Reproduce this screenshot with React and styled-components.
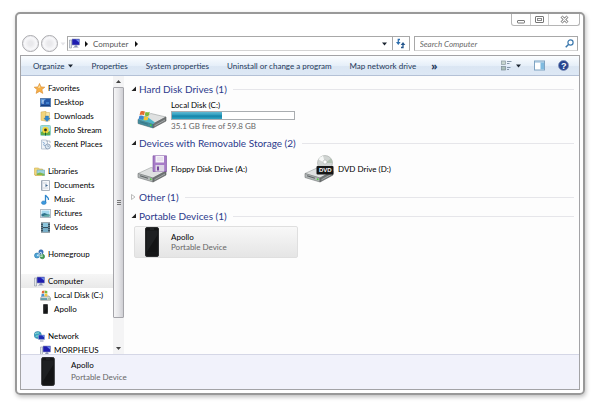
import React, { useState } from "react"
import styled, { createGlobalStyle } from "styled-components"


// ---- icons ----

const StarIcon = () => (
  <svg width="11" height="11" viewBox="0 0 11 11" aria-hidden="true">
    <path d="M5.5 .4 7 3.9l3.8.3-2.9 2.4.9 3.8-3.3-2-3.4 2 .9-3.8L.2 4.2 4 3.9z" fill="#f6b04a" stroke="#d98a2b" strokeWidth=".6" />
    <path d="M5.5 2.2 6.4 4.6 4 5z" fill="#fde3a6" />
  </svg>
)

const DesktopIcon = () => (
  <svg width="11" height="11" viewBox="0 0 11 11" aria-hidden="true">
    <rect x=".5" y="1.5" width="10" height="8" fill="#2458a8" stroke="#5b7fae" />
    <path d="M1 2h5L1 7z" fill="#5f9ade" />
    <path d="M2 4h2M2 6h2" stroke="#d7e6f7" />
    <path d="M1 8.500h9" stroke="#173f80" />
    <path d="M6 5h3v2H6z" fill="#3e7fcb" />
  </svg>
)

const DownloadsIcon = () => (
  <svg width="11" height="11" viewBox="0 0 11 11" aria-hidden="true">
    <path d="M1 1l5-.7V10L1 9.300z" fill="#f2d57c" stroke="#cfa951" strokeWidth=".5" />
    <path d="M6 1.500h3.500V10H5z" fill="#f8e7a9" stroke="#cfae5c" strokeWidth=".5" />
    <path d="M5.500 5h3v2.300H10L7 10.600 4 7.300h1.500z" fill="#2e86cf" stroke="#1d65a8" strokeWidth=".4" />
  </svg>
)

const PhotoStreamIcon = () => (
  <svg width="11" height="11" viewBox="0 0 11 11" aria-hidden="true">
    <rect x=".5" y=".5" width="10" height="10" rx="1" fill="#9fdbe4" stroke="#8ccfc4" />
    <path d="M1 7l3-1.500L6 8l4-2v4H1z" fill="#5fae4a" />
    <circle cx="5.500" cy="5" r="3.200" fill="#f3d63c" />
    <circle cx="5.500" cy="5" r="1.400" fill="#3c3512" />
    <path d="M5.500 7.500v3" stroke="#1c5f28" />
  </svg>
)

const RecentIcon = () => (
  <svg width="11" height="11" viewBox="0 0 11 11" aria-hidden="true">
    <path d="M1.500 1h5l1 1v8h-6z" fill="#eef3f8" stroke="#a5b3c4" strokeWidth=".7" />
    <path d="M2.500 3l2 1-1 2 2 1" fill="none" stroke="#7fa6d0" strokeWidth=".8" />
    <circle cx="7.800" cy="7.500" r="2.500" fill="#dce9f4" stroke="#8094ad" strokeWidth=".8" />
    <path d="M7.800 6v1.500H9M6 2h4v2" fill="none" stroke="#8496ab" strokeWidth=".6" />
  </svg>
)

const LibrariesIcon = () => (
  <svg width="11" height="11" viewBox="0 0 11 11" aria-hidden="true">
    <path d="M.5 2h4l1 1h3v6h-8z" fill="#f2d879" stroke="#cdae53" strokeWidth=".6" />
    <path d="M3 4h7.500v5.500H3z" fill="#9ed3dd" stroke="#6ca9b0" strokeWidth=".6" />
    <path d="M3 7.500 6 6.500l4.500 1.500v1.500H3z" fill="#83b84b" />
    <path d="M1 9.500h7" stroke="#d8c06a" />
  </svg>
)

const DocumentIcon = () => (
  <svg width="11" height="11" viewBox="0 0 11 11" aria-hidden="true">
    <path d="M1.500 .5h8v10h-8z" fill="#f5f7fa" stroke="#a9b3be" />
    <path d="M3 3h4M3 8h5" stroke="#ccd4dc" />
    <path d="M5.500 4l2.500 1.500L5.500 7z" fill="#42698f" />
    <path d="M2 1v9" stroke="#7c8fa3" strokeWidth=".6" />
  </svg>
)

const MusicIcon = () => (
  <svg width="11" height="11" viewBox="0 0 11 11" aria-hidden="true">
    <path d="M5.500 8.500V1c.5 2 3.500 2 3 5" fill="none" stroke="#2f87cc" strokeWidth="1.300" />
    <ellipse cx="3.800" cy="8.700" rx="2.400" ry="1.800" fill="#3d9ade" stroke="#2272b4" strokeWidth=".5" />
  </svg>
)

const PicturesIcon = () => (
  <svg width="11" height="11" viewBox="0 0 11 11" aria-hidden="true">
    <rect x=".5" y="1.500" width="10" height="8" fill="#fff" stroke="#b2bcc5" />
    <rect x="1.500" y="2.500" width="8" height="6" fill="#a4d8ee" />
    <path d="M1.500 6l3-1 5 2v1.500h-8z" fill="#31748c" />
    <path d="M4 7.500 9.500 6v2.500H4z" fill="#60a9a2" />
  </svg>
)

const VideosIcon = () => (
  <svg width="11" height="11" viewBox="0 0 11 11" aria-hidden="true">
    <rect x="1" y=".5" width="9" height="10" fill="#35505f" />
    <rect x="3" y="1" width="5" height="4" fill="#8cc5dc" />
    <rect x="3" y="6" width="5" height="4" fill="#76aec8" />
    <path d="M2 1v9M9 1v9" stroke="#c6d3da" strokeWidth=".8" strokeDasharray="1 1" />
  </svg>
)

const HomegroupIcon = () => (
  <svg width="11" height="11" viewBox="0 0 11 11" aria-hidden="true">
    <circle cx="3" cy="6.500" r="2.500" fill="#4da5d6" stroke="#2372a8" strokeWidth=".6" />
    <circle cx="7" cy="3" r="2.200" fill="#3b78c4" stroke="#20529b" strokeWidth=".6" />
    <circle cx="8.300" cy="7.500" r="2.300" fill="#46a052" stroke="#22773a" strokeWidth=".6" />
    <path d="M3 6.500 7 3l1.300 4.500z" fill="none" stroke="#dff0fa" strokeWidth=".8" />
  </svg>
)

const ComputerIcon = () => (
  <svg width="11" height="11" viewBox="0 0 11 11" aria-hidden="true">
    <path d="M.5 2h2v8h-2z" fill="#e3e6ea" stroke="#8b95a3" strokeWidth=".6" />
    <path d="M3 1h7.500v6H3z" fill="#1e1cb0" stroke="#8d96b8" strokeWidth=".6" />
    <path d="M6.500 1.400h3.600v3z" fill="#6f8bea" />
    <path d="M6 7.300h2l.7 1.700H5z" fill="#8a92b5" />
    <path d="M4 9.500h5.500" stroke="#b6bbcb" strokeWidth=".8" />
  </svg>
)

const WinDriveIcon = () => (
  <svg width="11" height="11" viewBox="0 0 11 11" aria-hidden="true">
    <path d="M.5 8 2 6h7l1.500 2v2.200H.5z" fill="#d1d6d4" stroke="#818987" strokeWidth=".6" />
    <path d="M1 8.300h6v1.400H1z" fill="#3f8d9e" />
    <path d="M2 1l2.300-.5v2.700L1.700 3.500z" fill="#e2683a" />
    <path d="M4.700.5 7.300 1v2.500l-2.600-.3z" fill="#79b541" />
    <path d="M1.600 4l2.600-.3v2.600L1.300 6.500z" fill="#4a90d0" />
    <path d="M4.700 3.700l2.700.3v2.500l-2.700-.2z" fill="#f3c73d" />
    <path d="M8.500 8.800h1" stroke="#58b54e" />
  </svg>
)

const NetworkIcon = () => (
  <svg width="11" height="11" viewBox="0 0 11 11" aria-hidden="true">
    <circle cx="3.800" cy="4" r="3.600" fill="#35a3c4" stroke="#1d6f9d" strokeWidth=".5" />
    <path d="M1 3c2-2 3 0 4-1.500M1.500 6C3 4 4 6 5 4" fill="none" stroke="#b6ebd4" strokeWidth=".9" />
    <path d="M4.500 4h6v4.500h-6z" fill="#1c2bb2" stroke="#9aa9c9" strokeWidth=".6" />
    <path d="M7.500 4.300h2.700v2z" fill="#7093ec" />
    <path d="M6 10h3.500" stroke="#8f99b0" />
  </svg>
)

const PhoneIcon = ({ width = 5, height = 10 }) => (
  <svg width={width} height={height} viewBox="0 0 14 30" aria-hidden="true">
    <rect x=".5" y=".5" width="13" height="29" rx="1.500" fill="#151617" stroke="#2c2d2f" />
    <rect x="1.500" y="3.500" width="11" height="22" fill="#1e2022" />
    <path d="M1.500 25.500 12.500 8v17.500z" fill="#131415" />
    <path d="M5 2h4" stroke="#3e4042" strokeWidth=".7" />
  </svg>
)

// the drive box shared by the big tiles, extra art goes over it
const DriveIcon = ({ children }) => (
  <svg width="30" height="28" viewBox="0 0 30 28" aria-hidden="true">
    <path d="M1 18.500 14 12.500 29 16 16 23z" fill="#dfe1e1" stroke="#9b9fa0" strokeWidth=".6" />
    <path d="M1 18.500v4L16 27v-4z" fill="#b4b8b9" stroke="#6e7374" strokeWidth=".6" />
    <path d="M16 23 29 16v4l-13 7z" fill="#6f7475" stroke="#585c5d" strokeWidth=".6" />
    <path d="M3 20.700l8 2.500" stroke="#5e6364" strokeWidth="1.200" />
    <path d="M13 24l1.500.5" stroke="#4fd03e" strokeWidth="1.600" />
    <path d="M17.500 24.800 28 19" stroke="#c8cbcb" strokeWidth=".6" />
    {children}
  </svg>
)

const HardDriveArt = () => (
  <>
    <path d="M1 18.500 9 15l9 6.500-2 1.500z" fill="#4fb4c8" />
    <path d="M1 18.500v4L16 27v-4z" fill="#2b7f94" opacity=".8" />
    <path d="M13 24l1.500.5" stroke="#4fd03e" strokeWidth="1.600" />
    <path d="M3.500 10.500c2-.9 3-.5 4.500 0L7 14.300c-1.700-.6-2.700-.6-4.500 0z" fill="#e46b31" />
    <path d="M8.600 10.700c1.700.8 2.700.6 4.200 0l-1 3.700c-1.600.7-2.600.6-4.200.1z" fill="#7cb93c" />
    <path d="M2.300 15c1.700-.7 2.700-.6 4.500 0L6 18.700c-1.700-.6-2.700-.6-4.500 0z" fill="#3f86cf" />
    <path d="M7.400 15.200c1.700.7 2.700.5 4.200 0l-1 3.700c-1.600.6-2.600.5-4.200.1z" fill="#f5c736" />
  </>
)

const FloppyArt = () => (
  <>
    <path d="M16 .8h13.500v15.700H16z" fill="#a67bc7" stroke="#7a4f9f" strokeWidth=".6" />
    <path d="M18.500 1h8.500v6.500h-8.500z" fill="#f5f2f8" />
    <path d="M18.500 10h8.700v6.500h-8.700z" fill="#dcd6e4" />
    <path d="M20 11.500h2v4h-2z" fill="#76499c" />
    <path d="M20 3h6M20 5h6" stroke="#c9bdd6" strokeWidth=".6" />
  </>
)

const DvdLabel = styled.text`
  font: bold 6px "Liberation Sans", sans-serif;
  fill: #fff;
`

const DvdArt = () => (
  <>
    <circle cx="21" cy="8" r="7.500" fill="#d0d4d2" stroke="#a2a7a5" strokeWidth=".6" />
    <path d="M21 8 14.500 4.500A7.500 7.500 0 0 1 19 .8z" fill="#f6f8f7" />
    <path d="M21 8 27 3.500A7.500 7.500 0 0 1 28.500 8z" fill="#b3c2b3" />
    <circle cx="21" cy="7" r="2" fill="#fff" stroke="#a2a7a5" strokeWidth=".5" />
    <rect x="12.500" y="11" width="17" height="8.500" rx="1" fill="#161616" />
    <DvdLabel x="15" y="17">DVD</DvdLabel>
  </>
)

const ArrowIcon = () => (
  <svg width="3" height="6" viewBox="0 0 3 6" aria-hidden="true">
    <path d="M0 0l3 3-3 3z" fill="#111" />
  </svg>
)

const CaretIcon = () => (
  <svg width="5" height="4" viewBox="0 0 5 4" aria-hidden="true">
    <path d="M0 .5h5L2.500 3.500z" fill="#1b2430" />
  </svg>
)

const RefreshIcon = () => (
  <svg width="11" height="11" viewBox="0 0 11 11" aria-hidden="true">
    <path d="M5 1.500H3.300v4" fill="none" stroke="#2f6fae" strokeWidth="1.300" />
    <path d="M1 4h4.600L3.300 7z" fill="#2f6fae" />
    <path d="M6 9.500h2V6" fill="none" stroke="#23558c" strokeWidth="1.300" />
    <path d="M5.700 7h4.600L8 4z" fill="#23558c" />
  </svg>
)

const SearchIcon = () => (
  <svg width="9" height="9" viewBox="0 0 9 9" aria-hidden="true">
    <circle cx="5.500" cy="3.500" r="2.600" fill="#fff" stroke="#3b78ad" strokeWidth="1.200" />
    <path d="M3.700 5.300.7 8.300" stroke="#3b78ad" strokeWidth="1.500" />
  </svg>
)

const ViewIcon = () => (
  <svg width="11" height="11" viewBox="0 0 11 11" aria-hidden="true">
    <rect x=".5" y="1" width="4" height="3.500" fill="#c9d6cf" stroke="#8b9ba0" strokeWidth=".7" />
    <rect x=".5" y="6.500" width="4" height="3.500" fill="#a9bdb8" stroke="#7d8d94" strokeWidth=".7" />
    <path d="M6 1.500h4.500M6 3.500h2.500M6 7.500h3.500M6 9.500h2" stroke="#6b8094" strokeWidth=".8" />
  </svg>
)

const PreviewIcon = () => (
  <svg width="11" height="11" viewBox="0 0 11 11" aria-hidden="true">
    <rect x=".5" y="1" width="10" height="9" fill="#fff" stroke="#7fa3c2" />
    <path d="M1 2h9" stroke="#8ab4d6" />
    <rect x="6.500" y="2.500" width="3.500" height="7" fill="#7fbbe0" />
  </svg>
)

const HelpMark = styled.text`
  font: bold 9px "Liberation Sans", sans-serif;
  fill: #fff;
`

const HelpIcon = () => (
  <svg width="11" height="11" viewBox="0 0 11 11" aria-hidden="true">
    <circle cx="5.500" cy="5.500" r="5" fill="#27438f" stroke="#7e8fb8" strokeWidth=".8" />
    <HelpMark x="3" y="9">?</HelpMark>
  </svg>
)

const MinimizeIcon = () => (
  <svg width="8" height="9" viewBox="0 0 8 9" aria-hidden="true">
    <rect x=".5" y="5.500" width="7" height="2.500" rx=".5" fill="#fff" stroke="#777" />
  </svg>
)

const MaximizeIcon = () => (
  <svg width="9" height="9" viewBox="0 0 9 9" aria-hidden="true">
    <rect x=".5" y="1.500" width="8" height="6" rx=".5" fill="#fff" stroke="#777" />
    <rect x="2.500" y="3.500" width="4" height="2" fill="#fff" stroke="#888" />
  </svg>
)

const CloseIcon = () => (
  <svg width="9" height="9" viewBox="0 0 9 9" aria-hidden="true">
    <path d="M1.500 1.500l6 6M7.500 1.500l-6 6" stroke="#777" strokeWidth="2.800" />
    <path d="M1.700 1.700l5.600 5.600M7.300 1.700 1.700 7.300" stroke="#fff" strokeWidth="1.200" />
  </svg>
)


// ---- data ----

const navGroups = [
  {
    name: 'Favorites', icon: <StarIcon />, items: [
      { name: 'Desktop', icon: <DesktopIcon /> },
      { name: 'Downloads', icon: <DownloadsIcon /> },
      { name: 'Photo Stream', icon: <PhotoStreamIcon /> },
      { name: 'Recent Places', icon: <RecentIcon /> },
    ]
  },
  {
    name: 'Libraries', icon: <LibrariesIcon />, items: [
      { name: 'Documents', icon: <DocumentIcon /> },
      { name: 'Music', icon: <MusicIcon /> },
      { name: 'Pictures', icon: <PicturesIcon /> },
      { name: 'Videos', icon: <VideosIcon /> },
    ]
  },
  { name: 'Homegroup', icon: <HomegroupIcon />, items: [] },
  {
    name: 'Computer', icon: <ComputerIcon />, items: [
      { name: 'Local Disk (C:)', icon: <WinDriveIcon /> },
      { name: 'Apollo', icon: <PhoneIcon /> },
    ]
  },
  {
    name: 'Network', icon: <NetworkIcon />, items: [
      { name: 'MORPHEUS', icon: <ComputerIcon /> },
    ]
  },
]

const sections = [
  {
    title: 'Hard Disk Drives (1)', open: true, items: [
      { name: 'Local Disk (C:)', used: 41, note: '35.1 GB free of 59.8 GB', icon: <DriveIcon><HardDriveArt /></DriveIcon> },
    ]
  },
  {
    title: 'Devices with Removable Storage (2)', open: true, items: [
      { name: 'Floppy Disk Drive (A:)', icon: <DriveIcon><FloppyArt /></DriveIcon> },
      { name: 'DVD Drive (D:)', icon: <DriveIcon><DvdArt /></DriveIcon> },
    ]
  },
  { title: 'Other (1)', open: false, items: [] },
  {
    title: 'Portable Devices (1)', open: true, items: [
      { name: 'Apollo', note: 'Portable Device', selected: true, icon: <PhoneIcon width={14} height={30} /> },
    ]
  },
]


// ---- parts ----

const Section = ({ title, open, items }) => {

  const [isOpen, setIsOpen] = useState(open)

  return (
    <section>
      <SectionTitle>
        <SectionToggle aria-expanded={isOpen} onClick={() => setIsOpen(!isOpen)}>
          <svg width="5" height="6" viewBox="0 0 5 6" aria-hidden="true">
            {isOpen
              ? <path d="M5 .5V5H.5z" fill="#222" />
              : <path d="M.5 .5 4 3 .5 5.500z" fill="#fff" stroke="#aaa" strokeWidth=".8" />
            }
          </svg>
          {title}
        </SectionToggle>
      </SectionTitle>
      {isOpen && items.length > 0 &&
        <Tiles>
          {items.map(item => (
            <Tile key={item.name} $selected={item.selected}>
              <TileIcon>{item.icon}</TileIcon>
              <TileText>
                <div>{item.name}</div>
                {item.used &&
                  <Meter role="meter" aria-label="Used space" aria-valuenow={item.used}>
                    <MeterFill style={{ width: `${item.used}%` }} />
                  </Meter>
                }
                {item.note && <Note>{item.note}</Note>}
              </TileText>
            </Tile>
          ))}
        </Tiles>
      }
    </section>
  )
}

const App = () => {

  const [current, setCurrent] = useState('Computer')

  return (
    <>
      <GlobalStyle />
      <Window>
        <TitleBar>
          <Captions>
            <CaptionButton aria-label="Minimize"><MinimizeIcon /></CaptionButton>
            <CaptionButton aria-label="Maximize"><MaximizeIcon /></CaptionButton>
            <CaptionButton $wide aria-label="Close"><CloseIcon /></CaptionButton>
          </Captions>
        </TitleBar>

        <AddressRow>
          <RoundButton aria-label="Back" />
          <RoundButton aria-label="Forward" />
          <HistoryButton aria-label="Recent pages">
            <svg width="6" height="4" viewBox="0 0 6 4" aria-hidden="true">
              <path d="M.5 .5h5l-2.500 3z" fill="#e4e4e8" />
            </svg>
          </HistoryButton>
          <AddressBar>
            <ComputerIcon />
            <ArrowIcon />
            <Crumb href="#computer">Computer</Crumb>
            <ArrowIcon />
            <DropButton aria-label="Previous locations"><CaretIcon /></DropButton>
            <RefreshButton aria-label="Refresh"><RefreshIcon /></RefreshButton>
          </AddressBar>
          <SearchBox>
            <SearchInput type="text" aria-label="Search Computer" placeholder="Search Computer" />
            <SearchIcon />
          </SearchBox>
        </AddressRow>

        <Inner>
          <Toolbar>
            <ToolButton>Organize <CaretIcon /></ToolButton>
            <ToolButton>Properties</ToolButton>
            <ToolButton>System properties</ToolButton>
            <ToolButton>Uninstall or change a program</ToolButton>
            <ToolButton>Map network drive</ToolButton>
            <MoreButton aria-label="More commands">»</MoreButton>
            <ToolbarEnd>
              <ToolButton aria-label="Change your view"><ViewIcon /> <CaretIcon /></ToolButton>
              <ToolButton aria-label="Preview pane"><PreviewIcon /></ToolButton>
              <ToolButton aria-label="Help"><HelpIcon /></ToolButton>
            </ToolbarEnd>
          </Toolbar>

          <Body>
            <Nav aria-label="Folders">
              {navGroups.map(group => (
                <NavGroup key={group.name}>
                  <NavLink href="#" $selected={current === group.name} onClick={() => setCurrent(group.name)}>
                    <NavIcon>{group.icon}</NavIcon>{group.name}
                  </NavLink>
                  {group.items.map(item => (
                    <NavLink key={item.name} href="#" $child $selected={current === item.name} onClick={() => setCurrent(item.name)}>
                      <NavIcon>{item.icon}</NavIcon>{item.name}
                    </NavLink>
                  ))}
                </NavGroup>
              ))}
            </Nav>
            <ScrollBar>
              <ScrollArrow>
                <svg width="5" height="3" viewBox="0 0 5 3"><path d="M0 3h5L2.500 0z" fill="#444" /></svg>
              </ScrollArrow>
              <ScrollThumb>
                <svg width="4" height="6" viewBox="0 0 4 6"><path d="M0 .5h4M0 2.500h4M0 4.500h4" stroke="#777" /></svg>
              </ScrollThumb>
              <ScrollSpace />
              <ScrollArrow>
                <svg width="5" height="3" viewBox="0 0 5 3"><path d="M0 0h5L2.500 3z" fill="#444" /></svg>
              </ScrollArrow>
            </ScrollBar>
            <Content>
              {sections.map(section => <Section key={section.title} {...section} />)}
            </Content>
          </Body>

          <Details>
            <PhoneIcon width={14} height={29} />
            <div>
              <div>Apollo</div>
              <Note>Portable Device</Note>
            </div>
          </Details>
        </Inner>
      </Window>
    </>
  )
}

export default App



const GlobalStyle = createGlobalStyle`
  *{
    box-sizing: border-box;
  }

  body{
    margin: 0;
    background: #fff;
    color: #000;
    font: 8px/10px Lato, sans-serif;
  }

  svg{
    display: block;
    flex: none;
  }

  button, input{
    margin: 0;
    padding: 0;
    border: 0;
    background: none;
    color: inherit;
    font: inherit;
  }

  a{
    color: inherit;
    text-decoration: none;
  }
`

const Window = styled.div`
  display: flex;
  flex-direction: column;
  height: calc(100vh - 32px);
  margin: 12px 15px 20px;
  padding: 0 3px 3px;
  border: 2px solid #999;
  border-radius: 5px;
  box-shadow: 1px 2px 4px rgba(0, 0, 0, .25);
  overflow: hidden;
`

const TitleBar = styled.header`
  display: flex;
  justify-content: flex-end;
  height: 22px;
`

const Captions = styled.div`
  display: flex;
  height: 12px;
  border: 1px solid #b5b5b5;
  border-top: 0;
  border-radius: 0 0 3px 3px;
`

const CaptionButton = styled.button`
  display: flex;
  align-items: center;
  justify-content: center;
  width: ${p => p.$wide ? 31 : 18}px;

  & + &{
    border-left: 1px solid #ccc;
  }
`

const AddressRow = styled.div`
  display: flex;
  align-items: center;
  height: 15px;
  margin-bottom: 4px;
  padding: 0 2px;
  color: #555;
`

const RoundButton = styled.button`
  width: 17px;
  height: 17px;
  margin-right: 2px;
  border: 1px solid #a9a9ad;
  border-radius: 50%;
  background: radial-gradient(#e9e9ec 20%, #f8f8fa 55%, #fff);
  box-shadow: inset 0 0 0 1px #ededf0;
`

const HistoryButton = styled.button`
  display: flex;
  align-items: center;
  width: 7px;
`

const AddressBar = styled.div`
  display: flex;
  align-items: center;
  flex: 348 1 0;
  gap: 5px;
  height: 15px;
  padding-left: 1px;
  border: 1px solid #a8a8a8;
  border-bottom-color: #d4d4d4;
`

const Crumb = styled.a`
  margin-right: 2px;
`

const DropButton = styled.button`
  margin-left: auto;
`

const RefreshButton = styled.button`
  display: flex;
  align-items: center;
  justify-content: center;
  width: 17px;
  height: 13px;
  border-left: 1px solid #a8a8a8;
`

const SearchBox = styled.div`
  display: flex;
  align-items: center;
  flex: 158 1 0;
  height: 15px;
  margin-left: 4px;
  padding: 0 3px 0 5px;
  border: 1px solid #a8a8a8;
  border-bottom-color: #d4d4d4;
`

const SearchInput = styled.input`
  flex: 1;
  min-width: 0;
  outline: 0;

  &::placeholder{
    color: #6a6a6a;
    font-style: italic;
    opacity: 1;
  }
`

const Inner = styled.div`
  display: flex;
  flex-direction: column;
  flex: 1;
  min-height: 0;
  border: 1px solid #a3a3a6;
`

const Toolbar = styled.div`
  display: flex;
  align-items: center;
  gap: 18px;
  height: 20px;
  flex: none;
  padding: 0 10px 0 12px;
  border-bottom: 1px solid #b4c1d6;
  background: linear-gradient(#fbfdff, #e6eff9 50%, #dbe6f3 52%, #dde8f5);
  color: #1e395b;
`

const ToolButton = styled.button`
  display: flex;
  align-items: center;
  gap: 4px;
  white-space: nowrap;
`

const MoreButton = styled(ToolButton)`
  margin-left: -3px;
  font: bold 10px/10px "Open Sans", sans-serif;
`

const ToolbarEnd = styled.div`
  display: flex;
  gap: 13px;
  margin-left: auto;
`

const Body = styled.div`
  display: flex;
  flex: 1;
  min-height: 0;
`

const Nav = styled.nav`
  width: 92px;
  padding-top: 5px;
  overflow: hidden;
`

const NavGroup = styled.div`
  margin-bottom: 13px;

  &:last-child{
    margin-bottom: 0;
  }
`

const NavLink = styled.a`
  display: flex;
  align-items: center;
  gap: 3px;
  height: 14px;
  padding-left: ${p => p.$child ? 19 : 13}px;
  background: ${p => p.$selected ? 'linear-gradient(#f6f6f6, #e9e9e9)' : 'none'};
  white-space: nowrap;
`

const NavIcon = styled.span`
  display: flex;
  justify-content: center;
  width: 11px;
`

const ScrollBar = styled.div`
  display: flex;
  flex-direction: column;
  width: 11px;
  background: #f4f4f5;
`

const ScrollArrow = styled.div`
  display: flex;
  align-items: center;
  justify-content: center;
  height: 11px;
`

const ScrollThumb = styled.div`
  display: flex;
  align-items: center;
  justify-content: center;
  flex: 230 1 0;
  border: 1px solid #a5a5aa;
  border-radius: 1px;
  background: linear-gradient(to right, #f5f5f6, #e6e6e9 50%, #cfcfd4);
`

const ScrollSpace = styled.div`
  flex: 25 1 0;
`

const Content = styled.main`
  display: flex;
  flex-direction: column;
  gap: 5px;
  flex: 1;
  min-width: 0;
  padding: 6px 5px 0 7px;
  background: #fdfdfd;
`

const SectionTitle = styled.h2`
  display: flex;
  align-items: center;
  gap: 6px;
  height: 14px;
  margin: 0;
  color: #2b3a8c;
  font-size: 10px;
  font-weight: normal;
  line-height: 12px;

  &::after{
    content: "";
    flex: 1;
    height: 1px;
    background: #e6e6ea;
  }
`

const SectionToggle = styled.button`
  display: flex;
  align-items: center;
  gap: 3px;
`

const Tiles = styled.div`
  display: grid;
  grid-template-columns: repeat(2, 164px);
  gap: 3px;
  margin: 3px 0 0 3px;
`

const Tile = styled.div`
  display: flex;
  align-items: center;
  gap: 4px;
  height: 32px;
  padding-left: 2px;
  border: 1px solid ${p => p.$selected ? '#dfdfdf' : 'transparent'};
  border-radius: 2px;
  background: ${p => p.$selected ? 'linear-gradient(#f8f8f8, #e5e5e5)' : 'none'};
`

const TileIcon = styled.div`
  display: flex;
  justify-content: center;
  flex: none;
  width: 30px;
`

const TileText = styled.div`
  flex: 1;
`

const Meter = styled.div`
  width: 124px;
  height: 9px;
  margin: 1px 0;
  border: 1px solid #a9adb0;
  background: #fff;
`

const MeterFill = styled.div`
  height: 100%;
  background: linear-gradient(#5fb9d3, #2b9cbd 45%, #1481a6 55%, #2fa5c4);
`

const Note = styled.div`
  color: #666;
`

const Details = styled.footer`
  display: flex;
  align-items: center;
  gap: 16px;
  flex: none;
  height: 35px;
  padding: 0 20px 2px;
  border-top: 1px solid #d5d7e6;
  background: #f1f2fb;
  line-height: 12px;
`
